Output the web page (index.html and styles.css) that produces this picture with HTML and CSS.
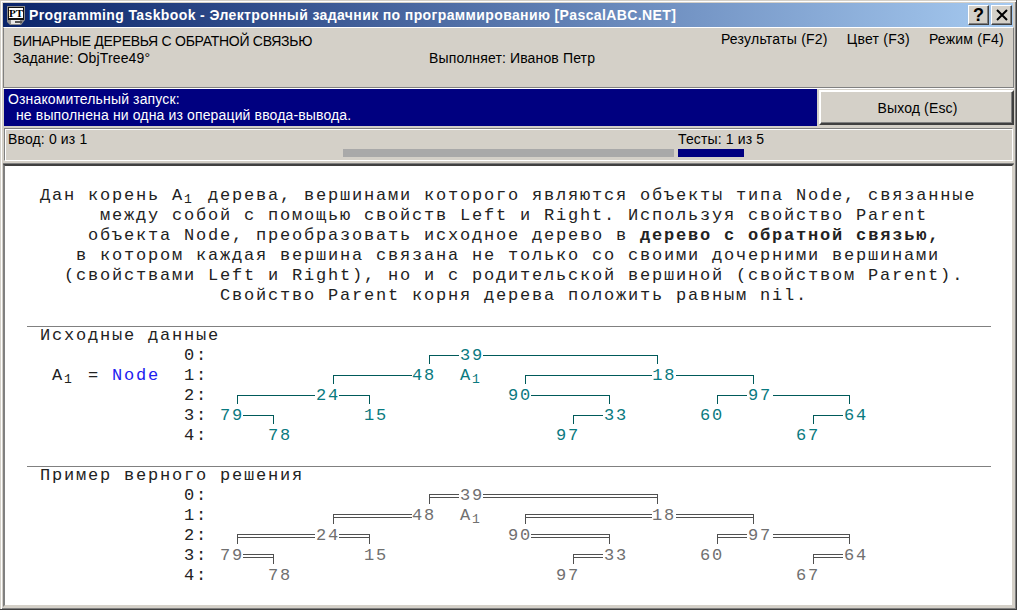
FILE: index.html
```html
<!DOCTYPE html>
<html lang="ru">
<head>
<meta charset="utf-8">
<title>Programming Taskbook</title>
<link rel="stylesheet" href="styles.css">
</head>
<body>
<div class="window">
  <div class="titlebar">
    <svg class="app-icon" width="18" height="19" viewBox="0 0 18 19">
      <path d="M0 0H18V14L14 19H3L0 16Z" fill="#8c8c8c"/>
      <rect x="1" y="1" width="16" height="13" fill="#111"/>
      <rect x="2" y="2" width="14" height="10" fill="#fff"/>
      <text x="9" y="11" class="app-icon-text" text-anchor="middle">PT</text>
      <rect x="4" y="14" width="9" height="4" fill="#e8e8e8"/>
      <rect x="8" y="15" width="7" height="2" fill="#555"/>
    </svg>
    <div class="title-text">Programming Taskbook - Электронный задачник по программированию [PascalABC.NET]</div>
    <div class="caption-btn help">?</div>
    <div class="caption-btn close">
      <svg width="12" height="12" viewBox="0 0 12 12"><path d="M1 1L11 11M11 1L1 11" stroke="#000" stroke-width="2" fill="none"/></svg>
    </div>
  </div>

  <div class="head-panel">
    <div class="head-row">
      <div class="topic">БИНАРНЫЕ ДЕРЕВЬЯ С ОБРАТНОЙ СВЯЗЬЮ</div>
      <div class="menu">
        <span>Результаты (F2)</span>
        <span>Цвет (F3)</span>
        <span>Режим (F4)</span>
      </div>
    </div>
    <div class="task-row">
      <div class="task">Задание: ObjTree49°</div>
      <div>Выполняет: Иванов Петр</div>
    </div>
  </div>

  <div class="status-row">
    <div class="message">
      <div>Ознакомительный запуск:</div>
      <div class="indent">не выполнена ни одна из операций ввода-вывода.</div>
    </div>
    <div class="exit-btn">Выход (Esc)</div>
  </div>

  <div class="progress-panel">
    <div class="input-count">Ввод: 0 из 1</div>
    <div class="gray-bar"></div>
    <div class="tests">
      <div>Тесты: 1 из 5</div>
      <div class="blue-bar"></div>
    </div>
  </div>

  <div class="content">
<pre class="mono description">Дан корень A<span class="sub">1</span> дерева, вершинами которого являются объекты типа Node, связанные
     между собой с помощью свойств Left и Right. Используя свойство Parent
    объекта Node, преобразовать исходное дерево в <b>дерево с обратной связью,</b>
   в котором каждая вершина связана не только со своими дочерними вершинами
  (свойствами Left и Right), но и с родительской вершиной (свойством Parent).
               Свойство Parent корня дерева положить равным nil.</pre>

    <section class="section">
      <div class="mono section-title">Исходные данные</div>
      <div class="tree mono">
<pre class="row">            0:<span class="val">                     39</span></pre>
<pre class="row"> A<span class="sub">1</span> = <span class="node">Node</span>  1:<span class="val">                 48  A<span class="sub">1</span>              18</span></pre>
<pre class="row">            2:<span class="val">         24              90                  97</span></pre>
<pre class="row">            3:<span class="val"> 79          15                  33      60          64</span></pre>
<pre class="row">            4:<span class="val">     78                      97                  67</span></pre>
        <svg class="links" width="960" height="100" viewBox="0 0 960 100">
          <path class="link" d="M389.5 19V10.5H419M443 10.5H617.5V19M293.5 39V30.5H372M485.5 39V30.5H612M636 30.5H713.5V39M197.5 59V50.5H275M299 50.5H329.5V59M491 50.5H569.5V59M677.5 59V50.5H707M733 50.5H809.5V59M203 70.5H233.5V79M533.5 79V70.5H563M773.5 79V70.5H803"/>
        </svg>
      </div>
    </section>

    <section class="section second">
      <div class="mono section-title">Пример верного решения</div>
      <div class="tree mono answer">
<pre class="row">            0:<span class="val">                     39</span></pre>
<pre class="row">            1:<span class="val">                 48  A<span class="sub">1</span>              18</span></pre>
<pre class="row">            2:<span class="val">         24              90                  97</span></pre>
<pre class="row">            3:<span class="val"> 79          15                  33      60          64</span></pre>
<pre class="row">            4:<span class="val">     78                      97                  67</span></pre>
        <svg class="links" width="960" height="100" viewBox="0 0 960 100">
          <path class="link-double" d="M389.5 19V9.5H419M419 12.5H389.5M443 9.5H617.5V19M443 12.5H617M293.5 39V29.5H372M372 32.5H293.5M485.5 39V29.5H612M612 32.5H485.5M636 29.5H713.5V39M636 32.5H713M197.5 59V49.5H275M275 52.5H197.5M299 49.5H329.5V59M299 52.5H329M491 49.5H569.5V59M491 52.5H569M677.5 59V49.5H707M707 52.5H677.5M733 49.5H809.5V59M733 52.5H809M203 69.5H233.5V79M203 72.5H233M533.5 79V69.5H563M563 72.5H533.5M773.5 79V69.5H803M803 72.5H773.5"/>
        </svg>
      </div>
    </section>
  </div>
</div>
</body>
</html>
```
FILE: styles.css
```css
* {
  box-sizing: border-box;
}

html,
body {
  margin: 0;
  padding: 0;
  width: 1017px;
  height: 610px;
  overflow: hidden;
}

body {
  background: #d4d0c8;
  font-family: "Liberation Sans", Arial, sans-serif;
  font-size: 14px;
  letter-spacing: 0.14px;
  line-height: 16px;
  color: #000;
}

.window {
  width: 1017px;
  height: 610px;
  display: flex;
  flex-direction: column;
  padding: 1px 1px 2px 1px;
  background: #d4d0c8;
  border-right: 1px solid #404040;
  border-bottom: 1px solid #404040;
  box-shadow: inset 1px 1px 0 #d4d0c8, inset 2px 2px 0 #fff, inset -1px -1px 0 #808080;
}

.titlebar {
  flex: none;
  height: 24px;
  margin: 2px 2px 0 2px;
  padding-left: 4px;
  display: flex;
  align-items: center;
  background: linear-gradient(to right, #0a246a, #a6caf0);
}

.app-icon {
  flex: none;
  margin-right: 4px;
}

.app-icon-text {
  font-family: "Liberation Serif", serif;
  font-weight: bold;
  font-size: 11px;
  letter-spacing: 0;
  fill: #000;
}

.title-text {
  flex: 1;
  color: #fff;
  font-weight: bold;
  font-size: 14px;
  letter-spacing: 0.38px;
  white-space: nowrap;
}

.caption-btn {
  flex: none;
  width: 21px;
  height: 20px;
  display: flex;
  align-items: center;
  justify-content: center;
  background: #d4d0c8;
  border: 1px solid;
  border-color: #fff #404040 #404040 #fff;
  box-shadow: inset -1px -1px 0 #808080;
  font-weight: bold;
  font-size: 18px;
}

.help {
  margin-right: 2px;
}

.close {
  margin-right: 1px;
}

.head-panel {
  flex: none;
  height: 61px;
  margin: 0 1px 0 2px;
  padding: 5px 9px 0 9px;
  border-top: 1px solid #fff;
  border-left: 1px solid #808080;
  border-bottom: 1px solid #808080;
  border-right: 1px solid #808080;
  box-shadow: 0 1px 0 #fff;
}

.head-row {
  display: flex;
  justify-content: space-between;
}

.topic {
  letter-spacing: -0.27px;
}

.menu {
  display: flex;
  gap: 19px;
  margin-top: -2px;
  letter-spacing: 0.24px;
}

.task-row {
  display: flex;
  margin-top: 1px;
}

.task {
  width: 416px;
}

.status-row {
  flex: none;
  height: 37px;
  margin: 1px 0 0 3px;
  display: flex;
  gap: 2px;
}

.message {
  width: 813px;
  background: #000080;
  color: #fff;
  padding: 2px 4px 0 4px;
}

.indent {
  padding-left: 8px;
}

.exit-btn {
  width: 195px;
  height: 35px;
  margin-top: 1px;
  padding-left: 2px;
  display: flex;
  align-items: center;
  justify-content: center;
  background: #d4d0c8;
  border: 2px solid;
  border-color: #fff #404040 #404040 #fff;
  box-shadow: inset -1px -1px 0 #808080;
}

.progress-panel {
  flex: none;
  position: relative;
  height: 33px;
  margin: 2px 2px 0 3px;
  padding: 2px 0 0 3px;
  display: flex;
  border: 1px solid;
  border-color: #808080 #fff #fff #808080;
  box-shadow: inset 1px 1px 0 #fff;
}

.input-count {
  width: 335px;
}

.gray-bar {
  width: 331px;
  height: 8px;
  margin-top: 18px;
  background: #a9a9a9;
}

.tests {
  margin-left: 4px;
}

.blue-bar {
  width: 66px;
  height: 8px;
  margin-top: 2px;
  background: #000080;
}

.content {
  flex: 1;
  width: 1011px;
  margin: 3px 0 0 2px;
  padding-top: 19px;
  background: #fff;
  border: 2px solid;
  border-color: #404040 #d4d0c8 #d4d0c8 #808080;
  box-shadow: 0 -1px 0 #808080;
}

.mono {
  font-family: "Liberation Mono", "Courier New", monospace;
  font-size: 17px;
  letter-spacing: 1.8px;
  line-height: 20px;
  color: #222;
}

.description {
  margin: 0 0 0 35px;
  padding-top: 1px;
  height: 121px;
  white-space: pre;
}

.sub {
  display: inline-block;
  width: 12px;
  font-size: 13px;
  line-height: 0;
  letter-spacing: 0;
  vertical-align: -3px;
  text-align: left;
}

.section {
  margin: 20px 21px 0 22px;
  border-top: 1px solid #808080;
  padding-left: 13px;
}

.second {
  margin-top: 21px;
}

.section-title {
  height: 18px;
  line-height: 17px;
}

.tree {
  position: relative;
  height: 100px;
}

.row {
  margin: 0;
  height: 20px;
  padding-top: 1px;
  font: inherit;
  letter-spacing: inherit;
  white-space: pre;
}

.val {
  color: #0a7a80;
}

.answer .val {
  color: #707070;
}

.node {
  color: #2020f0;
}

.links {
  position: absolute;
  top: 0;
  left: 0;
}

.link,
.link-double {
  fill: none;
  stroke-width: 1;
  shape-rendering: crispEdges;
}

.link {
  stroke: #005a5a;
}

.link-double {
  stroke: #505050;
}
```
